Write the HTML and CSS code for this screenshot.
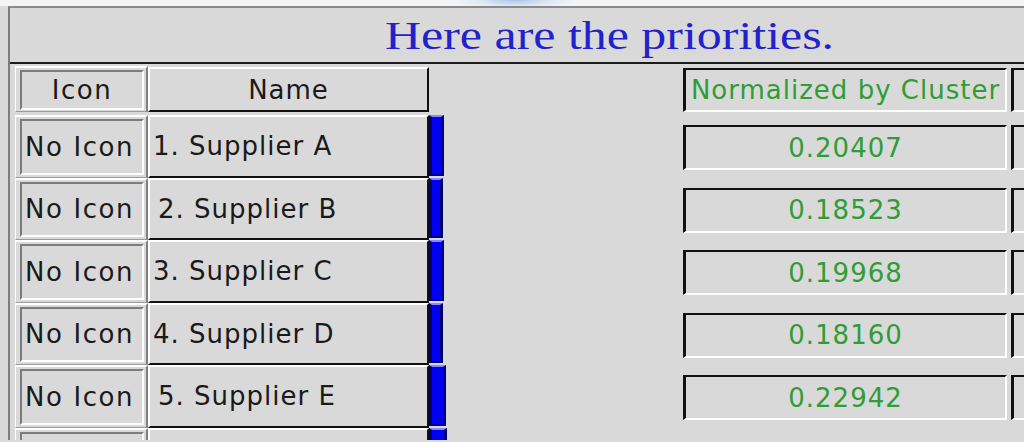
FILE: index.html
```html
<!DOCTYPE html>
<html>
<head>
<meta charset="utf-8">
<link rel="stylesheet" href="styles.css">
</head>
<body>
<div class="top"></div>
<div class="frame">
  <div class="title"><span class="title-text">Here are the priorities.</span></div>
  <div class="table">
    <div class="row head">
      <div class="icon-cell"><div class="icon-inner center">Icon</div></div>
      <div class="name-cell center">Name</div>
      <div class="bar-slot"></div>
      <div class="val-cell">Normalized by Cluster</div>
      <div class="val-cell extra"></div>
    </div>
    <div class="row">
      <div class="icon-cell"><div class="icon-inner">No Icon</div></div>
      <div class="name-cell">1. Supplier A</div>
      <div class="bar-slot"><div class="bar" style="width:15px"></div></div>
      <div class="val-cell">0.20407</div>
      <div class="val-cell extra"></div>
    </div>
    <div class="row">
      <div class="icon-cell"><div class="icon-inner">No Icon</div></div>
      <div class="name-cell indent">2. Supplier B</div>
      <div class="bar-slot"><div class="bar" style="width:14px"></div></div>
      <div class="val-cell">0.18523</div>
      <div class="val-cell extra"></div>
    </div>
    <div class="row">
      <div class="icon-cell"><div class="icon-inner">No Icon</div></div>
      <div class="name-cell">3. Supplier C</div>
      <div class="bar-slot"><div class="bar" style="width:15px"></div></div>
      <div class="val-cell">0.19968</div>
      <div class="val-cell extra"></div>
    </div>
    <div class="row">
      <div class="icon-cell"><div class="icon-inner">No Icon</div></div>
      <div class="name-cell">4. Supplier D</div>
      <div class="bar-slot"><div class="bar" style="width:14px"></div></div>
      <div class="val-cell">0.18160</div>
      <div class="val-cell extra"></div>
    </div>
    <div class="row">
      <div class="icon-cell"><div class="icon-inner">No Icon</div></div>
      <div class="name-cell indent">5. Supplier E</div>
      <div class="bar-slot"><div class="bar" style="width:17px"></div></div>
      <div class="val-cell">0.22942</div>
      <div class="val-cell extra"></div>
    </div>
    <div class="row">
      <div class="icon-cell"><div class="icon-inner"></div></div>
      <div class="name-cell"></div>
      <div class="bar-slot"><div class="bar" style="width:18px"></div></div>
    </div>
  </div>
</div>
</body>
</html>
```
FILE: styles.css
```css
html, body {
  margin: 0;
  padding: 0;
  width: 1024px;
  height: 442px;
  overflow: hidden;
  background: #dadada;
}
.top {
  height: 6px;
  background: radial-gradient(ellipse 60px 10px at 515px 0px, #a9c4e6 0%, #dfe8f3 60%, #f3f4f6 100%);
}
.frame {
  margin-left: 8px;
  border-top: 2px solid #8a8a8a;
  border-left: 2px solid #7d7d7d;
  background: #d9d9d9;
  height: 434px;
  box-sizing: border-box;
  overflow: hidden;
}
.title {
  height: 56px;
  border-bottom: 2px solid #1c1c1c;
  display: flex;
  align-items: center;
  padding-left: 375px;
  box-sizing: border-box;
  padding-top: 1px;
}
.title-text {
  display: inline-block;
  font-family: "Liberation Serif", serif;
  font-size: 39px;
  color: #2222cc;
  transform: scaleX(1.28);
  transform-origin: left center;
  white-space: nowrap;
}
.table {
  font-family: "DejaVu Sans", sans-serif;
  font-size: 26px;
  letter-spacing: 1px;
  color: #1a1a1a;
}
.row {
  display: flex;
  height: 62.5px;
  align-items: stretch;
}
.row > * {
  flex-shrink: 0;
}
.row.head {
  height: 51px;
}
.icon-cell {
  margin-left: 5px;
  width: 133px;
  box-sizing: border-box;
  border-top: 2px solid #ffffff;
  border-left: 1px solid #ffffff;
  border-right: 2px solid #808080;
  border-bottom: 1px solid #9a9a9a;
  padding: 2px 2px 2px 4px;
  display: flex;
}
.row.head .icon-cell {
  margin-top: 2px;
  margin-bottom: 3px;
  padding-bottom: 1px;
}
.icon-inner {
  flex: 1;
  border-top: 2px solid #7c7c7c;
  border-left: 2px solid #7c7c7c;
  border-right: 2px solid #ffffff;
  border-bottom: 2px solid #ffffff;
  display: flex;
  align-items: center;
  padding-left: 3px;
  white-space: nowrap;
  overflow: hidden;
  letter-spacing: 1.6px;
}
.name-cell {
  width: 281px;
  box-sizing: border-box;
  border-top: 2px solid #ffffff;
  border-left: 2px solid #ffffff;
  border-right: 2px solid #111111;
  border-bottom: 2px solid #111111;
  display: flex;
  align-items: center;
  padding-left: 3px;
  white-space: nowrap;
}
.name-cell.indent {
  padding-left: 8px;
}
.row.head .name-cell {
  margin-top: 3px;
  margin-bottom: 3px;
}
.center {
  justify-content: center;
  padding-left: 0;
}
.bar-slot {
  width: 254px;
  display: flex;
  padding-bottom: 2px;
  box-sizing: border-box;
}
.bar {
  box-sizing: border-box;
  background: #0000f2;
  border-left: 3px solid #000070;
  border-right: 3px solid #000070;
  border-top: 2px solid #8888ff;
  border-bottom: 2px solid #00008a;
}
.val-cell {
  width: 324px;
  box-sizing: border-box;
  height: 45px;
  margin-top: 10px;
  border-top: 2px solid #111111;
  border-left: 3px solid #111111;
  border-right: 2px solid #ffffff;
  border-bottom: 2px solid #ffffff;
  display: flex;
  align-items: center;
  justify-content: center;
  color: #2f9d35;
  white-space: nowrap;
}
.row.head .val-cell {
  margin-top: 4px;
  height: 44px;
}
.val-cell.extra {
  margin-left: 4px;
  width: 40px;
}
```
